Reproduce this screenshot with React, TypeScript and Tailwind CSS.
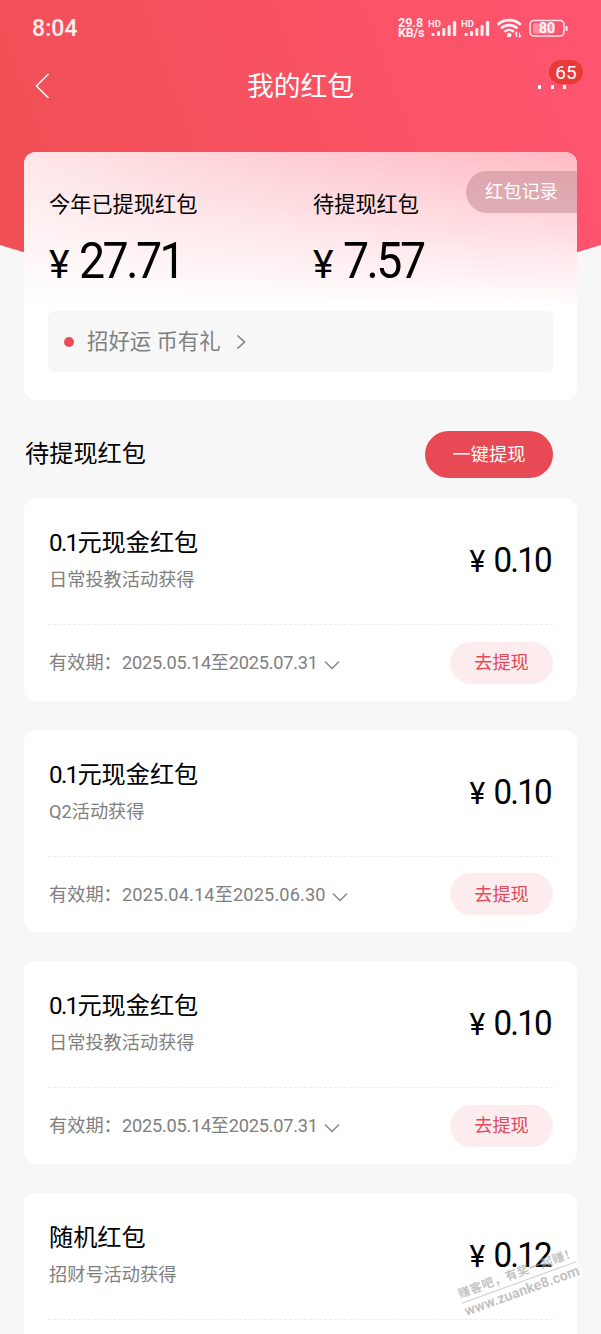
import React from 'react'

type Packet = {
  title: string
  source: string
  amount: string
  period?: string
  periodClass?: string
}

const packets: Packet[] = [
  {
    title: '0.1元现金红包',
    source: '日常投教活动获得',
    amount: '0.10',
    period: '2025.05.14至2025.07.31',
    periodClass: 'tracking-[-0.25px]',
  },
  {
    title: '0.1元现金红包',
    source: 'Q2活动获得',
    amount: '0.10',
    period: '2025.04.14至2025.06.30',
    periodClass: 'tracking-[0.13px]',
  },
  {
    title: '0.1元现金红包',
    source: '日常投教活动获得',
    amount: '0.10',
    period: '2025.05.14至2025.07.31',
    periodClass: 'tracking-[-0.25px]',
  },
  { title: '随机红包', source: '招财号活动获得', amount: '0.12' },
]

function Signal() {
  return (
    <svg className="h-[18px] w-[29px]" viewBox="0 0 29 18" fill="white" fillOpacity="0.9">
      <text x="0" y="7.5" fontSize="9.5" fontWeight="700">
        HD
      </text>
      <rect x="3.5" y="14" width="3.2" height="3" rx="1" />
      <rect x="9" y="12" width="3" height="5" rx="1" />
      <rect x="14.3" y="9" width="3" height="8" rx="1" />
      <rect x="19.6" y="6" width="3" height="11" rx="1" />
      <rect x="24.9" y="2" width="3.3" height="15" rx="1" />
    </svg>
  )
}

function StatusBar() {
  return (
    <div className="flex h-14 items-center justify-between pl-8 pr-8 text-white/90">
      <span className="text-[23px] font-medium leading-none tracking-[0.1px]">8:04</span>
      <div className="flex items-center">
        <div className="w-[30px] text-[12.5px] font-bold leading-[10.5px]">
          <div>29.8</div>
          <div className="tracking-[-0.2px]">KB/s</div>
        </div>
        <Signal />
        <span className="w-[4px]" />
        <Signal />
        <svg className="ml-[6px] h-[20px] w-[27px]" viewBox="0 0 27 20" fill="none" stroke="white" strokeOpacity="0.92">
          <path d="M1.6 6.8C8 .6 18.4 .6 24.8 6.8" strokeWidth="2.6" />
          <path d="M5 10.4C9.6 6 16.8 6 21.4 10.4" strokeWidth="2.6" />
          <path d="M8.4 13.9C11.2 11.3 15.2 11.3 18 13.9" strokeWidth="2.5" />
          <circle cx="13.2" cy="17" r="2.3" fill="white" stroke="none" />
          <path d="M20.5 19v-4.5l-1.5 1.5M23.5 14.5V19l1.5-1.5" strokeWidth="1.3" />
        </svg>
        <svg className="ml-[6px] h-[19px] w-[40px]" viewBox="0 0 40 19" fill="none">
          <rect x="1" y="1.5" width="34" height="15.5" rx="4" stroke="white" strokeOpacity="0.85" strokeWidth="1.6" />
          <rect x="4" y="4" width="22" height="10.5" rx="2" fill="white" fillOpacity="0.35" />
          <rect x="36.5" y="7" width="2.2" height="5" rx="1" fill="white" fillOpacity="0.85" />
          <text x="10" y="14.2" fontSize="14" fontWeight="500" fill="white">
            80
          </text>
        </svg>
      </div>
    </div>
  )
}

function NavBar() {
  return (
    <div className="relative flex h-[60px] items-center justify-center">
      <svg className="absolute left-[35px] top-[16px] h-[28px] w-[15px]" viewBox="0 0 15 28" fill="none" stroke="white" strokeWidth="1.5">
        <path d="M13.5 2 1.5 14 13.5 26" />
      </svg>
      <h1 className="pt-[2px] text-[26.8px] leading-none text-white">我的红包</h1>
      <div className="absolute right-[35px] top-[28.5px] flex gap-[9.5px]">
        <span className="h-[4.5px] w-[3px] bg-white" />
        <span className="h-[4.5px] w-[3px] bg-white" />
        <span className="h-[4.5px] w-[3px] bg-white" />
      </div>
      <span className="absolute right-[18px] top-[4px] flex h-6 w-[34px] items-center justify-center rounded-full bg-[#e93a38] text-[19px] leading-none text-white">
        65
      </span>
    </div>
  )
}

function Total({ label, value, className }: { label: string; value: string; className: string }) {
  return (
    <div className={className}>
      <div className="text-[21.2px] leading-[26px]">{label}</div>
      <div className="mt-[15px] flex h-[56px] items-baseline leading-[56px]">
        <span className="w-[30px] text-[39px]">¥</span>
        <span className="origin-left scale-x-[0.93] text-[50px] tracking-[-2.7px]">{value}</span>
      </div>
    </div>
  )
}

function SummaryCard() {
  return (
    <section className="relative mx-6 h-[248px] overflow-hidden rounded-xl bg-white px-6 pt-[40px]">
      {/* Pink wash, strongest in the top right corner */}
      <div className="absolute inset-x-0 top-0 h-[156px] bg-linear-to-r from-[#fde6e8] via-[#fdccd2] to-[#ffb9c4]" />
      <div className="absolute inset-x-0 top-0 h-[156px] bg-linear-to-b from-white/0 to-white" />
      <div className="relative flex">
        <Total label="今年已提现红包" value="27.71" className="w-[265px] pl-px" />
        <Total label="待提现红包" value="7.57" className="flex-1" />
      </div>
      <div className="relative mt-[22px] flex h-[61px] items-center rounded-md bg-[#f7f7f7] pl-4">
        <span className="h-[10px] w-[10px] rounded-full bg-[#e94b58]" />
        <span className="ml-[13px] text-[21.4px] leading-none text-[#808080]">招好运 币有礼</span>
        <svg className="ml-[15px] h-[16px] w-[10px]" viewBox="0 0 10 16" fill="none" stroke="#808080" strokeWidth="1.6">
          <path d="M1.5 1.5 8.5 8 1.5 14.5" />
        </svg>
      </div>
      <button className="absolute right-0 top-[19px] flex h-[42px] w-[111px] items-center rounded-l-full bg-[#c48a92]/55 pl-[19px] pt-px text-[18.2px] leading-none text-white">
        红包记录
      </button>
    </section>
  )
}

function PacketTitle({ title }: { title: string }) {
  const [, num, rest] = title.match(/^([\d.]*)(.*)$/)!
  return (
    <h3 className="text-[24.2px] leading-[30px] tracking-[-0.05px]">
      <span className="tracking-[-1.7px]">{num}</span>
      {rest}
    </h3>
  )
}

function PacketCard({ packet }: { packet: Packet }) {
  return (
    <article className="h-[202.5px] shrink-0 rounded-xl bg-white px-6">
      <div className="flex h-[127px] items-start justify-between border-b border-dashed border-[#ececec]">
        <div className="pl-px pt-[30px]">
          <PacketTitle title={packet.title} />
          <p className="mt-[10px] text-[18.2px] leading-[24px] text-[#808080]">{packet.source}</p>
        </div>
        <div className="flex origin-right scale-x-[0.96] items-baseline pr-[2.5px] pt-[42px] leading-[40px]">
          <span className="w-[25px] text-[31px]">¥</span>
          <span className="text-[34.5px] tracking-[-1.9px]">{packet.amount}</span>
        </div>
      </div>
      {packet.period && (
        <div className="flex h-[75px] items-center justify-between">
          <div className="flex items-center pl-px pt-px text-[18.2px] leading-none text-[#808080]">
            <span className="w-[73px] whitespace-nowrap">有效期：</span>
            <span className={packet.periodClass}>{packet.period}</span>
            <svg className="ml-[6px] mt-[4px] h-[10px] w-[16px]" viewBox="0 0 16 10" fill="none" stroke="#808080" strokeWidth="1.3">
              <path d="M1 1.5 8 8.500 15 1.5" />
            </svg>
          </div>
          <button className="h-[42px] w-[103px] rounded-full bg-[#fdecee] pt-px text-[18.2px] leading-none text-[#e4495a]">
            去提现
          </button>
        </div>
      )}
    </article>
  )
}

function Watermark() {
  return (
    <div className="absolute left-[458px] top-[1265px] w-[122px] rotate-[-20deg] font-bold text-[#999]/60">
      <div className="whitespace-nowrap border-b border-[#999]/50 text-[12px] leading-[17px] tracking-[0.5px]">
        赚客吧，有奖一起赚！
      </div>
      <div className="text-[14.3px] leading-[16px]">www.zuanke8.com</div>
    </div>
  )
}

export default function App() {
  return (
    <main className="relative h-[1334px] w-[601px] overflow-hidden bg-[#f7f7f7] font-[Roboto,'Noto_Sans_CJK_SC',sans-serif] text-black">
      {/* Red backdrop with a pointed lower edge */}
      <svg className="absolute left-0 top-0 h-[340px] w-[601px]" viewBox="0 0 601 340">
        <defs>
          <linearGradient id="top" x1="0" y1="0.2" x2="1" y2="0">
            <stop offset="0" stopColor="#f15057" />
            <stop offset="0.5" stopColor="#f95263" />
            <stop offset="1" stopColor="#ff5470" />
          </linearGradient>
        </defs>
        <path d="M0 0H601V245L300 336 0 245Z" fill="url(#top)" />
      </svg>
      <div className="relative">
        <StatusBar />
        <NavBar />
        <div className="mt-9">
          <SummaryCard />
        </div>
        <div className="flex h-[98px] items-center justify-between pl-[25px] pr-12 pt-[11px]">
          <h2 className="text-[24.2px] leading-none">待提现红包</h2>
          <button className="h-[47.5px] w-[128px] rounded-full bg-[#e74a55] pt-px text-[18.2px] leading-none text-white">
            一键提现
          </button>
        </div>
        <div className="flex flex-col gap-[29.2px] px-6">
          {packets.map((packet, i) => (
            <PacketCard key={i} packet={packet} />
          ))}
        </div>
      </div>
      <Watermark />
    </main>
  )
}
